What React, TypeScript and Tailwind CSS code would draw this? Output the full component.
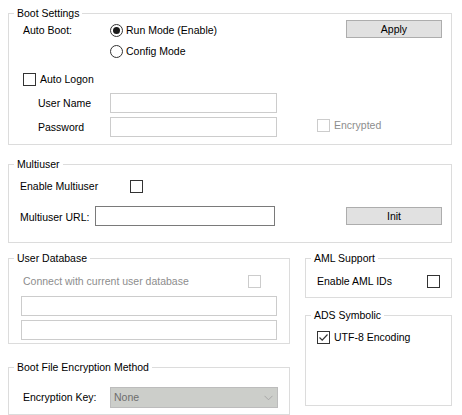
import React from "react";

// ── Small WinForms-like controls ─────────────────────────────────────────────

function Group({ title, className = "", children }: { title: string; className?: string; children: React.ReactNode }) {
  return (
    <fieldset className={`border border-[#dcdcdc] ${className}`}>
      <legend className="ml-[5px] px-[3px] text-[10.5px] leading-[14px] text-black">{title}</legend>
      {children}
    </fieldset>
  );
}

function Radio({ checked }: { checked?: boolean }) {
  return (
    <span className="w-[13px] h-[13px] rounded-full border border-[#333] bg-white flex items-center justify-center shrink-0">
      {checked && <span className="w-[7px] h-[7px] rounded-full bg-[#1a1a1a]" />}
    </span>
  );
}

function Check({ checked, disabled }: { checked?: boolean; disabled?: boolean }) {
  return (
    <span
      className={`w-[13px] h-[13px] border bg-white flex items-center justify-center shrink-0 ${
        disabled ? "border-[#cccccc]" : "border-[#333]"
      }`}
    >
      {checked && (
        <svg width="11" height="11" viewBox="0 0 11 11">
          <polyline points="1.5,5.5 4.2,8.2 9.5,2.5" fill="none" stroke="#333" strokeWidth="1.2" />
        </svg>
      )}
    </span>
  );
}

function TextBox({ className = "", dark }: { className?: string; dark?: boolean }) {
  return <div className={`h-[20px] bg-white border ${dark ? "border-[#7a7a7a]" : "border-[#cccccc]"} ${className}`} />;
}

function Button({ label }: { label: string }) {
  return (
    <div className="w-[96px] h-[18px] bg-[#e1e1e1] border border-[#adadad] flex items-center justify-center text-black">
      {label}
    </div>
  );
}

// ── Page ─────────────────────────────────────────────────────────────────────

export default function App() {
  return (
    <div
      className="w-[462px] h-[415px] bg-white pt-[6px] pl-[8px] pr-[10px] text-[10.5px] leading-[13px] text-black overflow-hidden"
      style={{ fontFamily: '"Liberation Sans", Arial, sans-serif' }}
    >
      {/* Boot Settings */}
      <Group title="Boot Settings" className="pb-[7px]">
        <div className="flex items-end h-[18px]">
          <span className="ml-[14px] w-[87px] mb-[1px]">Auto Boot:</span>
          <label className="flex items-center gap-[3px] mb-[1px]">
            <Radio checked />
            <span>Run Mode (Enable)</span>
          </label>
          <div className="ml-auto mr-[9px] self-start">
            <Button label="Apply" />
          </div>
        </div>
        <label className="flex items-center gap-[3px] h-[14px] mt-[6px] ml-[101px]">
          <Radio />
          <span>Config Mode</span>
        </label>
        <label className="flex items-center gap-[4px] h-[14px] mt-[14px] ml-[14px]">
          <Check />
          <span>Auto Logon</span>
        </label>
        <div className="flex items-center mt-[7px]">
          <span className="ml-[29px] w-[72px]">User Name</span>
          <TextBox className="w-[167px]" />
        </div>
        <div className="flex items-center mt-[4px]">
          <span className="ml-[29px] w-[72px]">Password</span>
          <TextBox className="w-[167px]" />
          <label className="flex items-center gap-[4px] ml-[40px] -mt-[3px] text-[#8d8d8d]">
            <Check disabled />
            <span>Encrypted</span>
          </label>
        </div>
      </Group>

      {/* Multiuser */}
      <Group title="Multiuser" className="mt-[12px] pb-[16px]">
        <div className="flex items-center h-[13px] mt-[9px]">
          <span className="ml-[11px] w-[110px]">Enable Multiuser</span>
          <Check />
        </div>
        <div className="flex items-center mt-[13px]">
          <span className="ml-[11px] w-[75px] mt-[3px]">Multiuser URL:</span>
          <TextBox dark className="w-[180px]" />
          <div className="ml-auto mr-[9px]">
            <Button label="Init" />
          </div>
        </div>
      </Group>

      {/* Lower columns */}
      <div className="flex gap-[15px] mt-[8px]">
        <div className="w-[282px] flex flex-col">
          <Group title="User Database" className="pb-[3px]">
            <div className="flex items-center h-[13px] mt-[10px]">
              <span className="ml-[14px] w-[225px] text-[#8d8d8d]">Connect with current user database</span>
              <Check disabled />
            </div>
            <TextBox className="ml-[12px] w-[256px] mt-[8px]" />
            <TextBox className="ml-[12px] w-[256px] mt-[4px]" />
          </Group>

          <Group title="Boot File Encryption Method" className="mt-[16px] pb-[6px]">
            <div className="flex items-center mt-[13px]">
              <span className="ml-[14px] w-[87px]">Encryption Key:</span>
              <div className="w-[168px] h-[21px] bg-[#ccceca] border border-[#bcbcbc] flex items-center pl-[3px] pr-[4px] text-[#6d6d6d]">
                <span className="flex-1">None</span>
                <svg width="9" height="6" viewBox="0 0 9 6">
                  <polyline points="0.5,0.8 4.5,4.8 8.5,0.8" fill="none" stroke="#a8a8a8" strokeWidth="1" />
                </svg>
              </div>
            </div>
          </Group>
        </div>

        <div className="w-[147px] flex flex-col">
          <Group title="AML Support" className="pb-[9px]">
            <div className="flex items-center h-[13px] mt-[10px]">
              <span className="ml-[11px] w-[110px]">Enable AML IDs</span>
              <Check />
            </div>
          </Group>

          <Group title="ADS Symbolic" className="mt-[10px] h-[98px]">
            <label className="flex items-center gap-[4px] h-[13px] mt-[9px] ml-[11px]">
              <Check checked />
              <span>UTF-8 Encoding</span>
            </label>
          </Group>
        </div>
      </div>
    </div>
  );
}
